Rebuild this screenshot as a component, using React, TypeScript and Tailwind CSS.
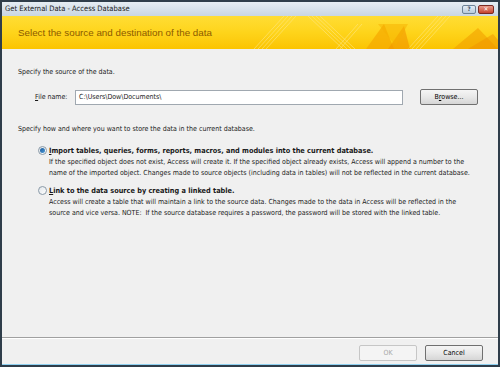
import React from "react";

const font = { fontFamily: '"DejaVu Sans Condensed", "DejaVu Sans", Tahoma, sans-serif' };

function Radio({ checked }: { checked?: boolean }) {
  return (
    <div className="w-[9px] h-[9px] rounded-full border border-[#8a9aa8] bg-gradient-to-br from-[#e0e5ea] to-[#ffffff] flex items-center justify-center shrink-0">
      {checked && <div className="w-[5px] h-[5px] rounded-full bg-gradient-to-br from-[#1a5a9a] to-[#4c9ad8]" />}
    </div>
  );
}

function Btn({ label, disabled, u }: { label: string; disabled?: boolean; u?: number }) {
  return (
    <div
      className={
        "w-[58px] h-[16px] rounded-[2px] border flex items-center justify-center text-[7px] " +
        (disabled
          ? "border-[#c6c6c6] bg-[#f4f4f4] text-[#a8a8a8]"
          : "border-[#707070] bg-gradient-to-b from-[#f5f5f5] via-[#e8e8e8] to-[#d6d6d6] text-black")
      }
    >
      {u !== undefined ? (
        <span>
          {label.slice(0, u)}
          <span className="underline">{label[u]}</span>
          {label.slice(u + 1)}
        </span>
      ) : (
        label
      )}
    </div>
  );
}

export default function App() {
  return (
    <div className="w-[500px] h-[367px] bg-[#2f3d4a] p-[2px] pb-0 flex flex-col" style={font}>
      {/* title bar */}
      <div className="h-[14px] bg-gradient-to-b from-[#e6edf3] to-[#c9d6e2] flex items-center pl-[3px] pr-[4px]">
        <span className="text-[7.5px] text-[#1a1a1a] leading-none">Get External Data - Access Database</span>
        <div className="ml-auto flex gap-[2px] items-center">
          <div className="w-[14px] h-[9px] rounded-[2px] border border-[#6d8296] bg-gradient-to-b from-[#e5eef6] to-[#b8cadb] flex items-center justify-center text-[6px] font-bold text-[#34495e] leading-none">?</div>
          <div className="w-[16px] h-[9px] rounded-[2px] border border-[#7a2a22] bg-gradient-to-b from-[#e89a8a] to-[#c4402c] flex items-center justify-center text-[6px] font-bold text-white leading-none">✕</div>
        </div>
      </div>
      {/* banner */}
      <div className="relative h-[33px] bg-gradient-to-b from-[#ffdd33] via-[#fed41a] to-[#fbc400] flex items-center pl-[16px] overflow-hidden">
        <svg className="absolute right-0 top-0" width="250" height="33" viewBox="0 0 250 33">
          <g stroke="#ffe680" strokeWidth="0.7" fill="none" opacity="0.9">
            <line x1="6" y1="33" x2="36" y2="0" />
            <line x1="10" y1="33" x2="40" y2="0" />
            <line x1="14" y1="33" x2="44" y2="0" />
            <line x1="18" y1="33" x2="48" y2="0" />
            <line x1="60" y1="0" x2="95" y2="33" />
            <line x1="64" y1="0" x2="99" y2="33" />
            <line x1="68" y1="0" x2="103" y2="33" />
            <line x1="72" y1="0" x2="107" y2="33" />
            <line x1="88" y1="33" x2="110" y2="8" />
            <line x1="92" y1="33" x2="114" y2="8" />
            <line x1="160" y1="33" x2="190" y2="0" />
            <line x1="164" y1="33" x2="194" y2="0" />
            <line x1="168" y1="33" x2="198" y2="0" />
            <line x1="172" y1="33" x2="202" y2="0" />
          </g>
          <polygon points="118,33 136,8 146,33" fill="#f5a800" opacity="0.7" />
          <polygon points="140,33 156,10 162,33" fill="#f29400" opacity="0.6" />
          <polygon points="130,8 160,8 148,30" fill="#f6b000" opacity="0.5" />
          <polygon points="205,33 230,12 250,33" fill="#f2a000" opacity="0.6" />
          <polygon points="220,33 245,18 250,24 250,33" fill="#ef9200" opacity="0.5" />
        </svg>
        <span className="relative text-[9.8px] text-[#8c5a00] leading-none" style={{ fontFamily: '"Liberation Sans", Arial, sans-serif' }}>
          Select the source and destination of the data
        </span>
      </div>
      {/* content */}
      <div className="flex-1 bg-[#f0f0f0] flex flex-col">
        <div className="flex-1 pl-[16px] pr-[10px] pt-[18px] text-[7px] text-[#1a1a1a] leading-[11px] whitespace-nowrap">
          <div>Specify the source of the data.</div>
          <div className="flex items-center mt-[11px] pl-[17px]">
            <span className="w-[40px]"><span className="underline">F</span>ile name:</span>
            <div className="w-[328px] h-[15px] border border-[#a0a8b0] bg-white flex items-center px-[3px]">C:\Users\Dow\Documents\</div>
            <div className="ml-[17px]">
              <Btn label="Browse..." u={1} />
            </div>
          </div>
          <div className="mt-[19px]">Specify how and where you want to store the data in the current database.</div>
          <div className="mt-[10px] pl-[20px] flex flex-col">
            <div className="flex items-center gap-[2px]">
              <Radio checked />
              <span className="font-bold text-[7.3px]"><span className="underline">I</span>mport tables, queries, forms, reports, macros, and modules into the current database.</span>
            </div>
            <div className="pl-[11px] leading-[11px] mt-px">
              If the specified object does not exist, Access will create it. If the specified object already exists, Access will append a number to the
              <br />
              name of the imported object. Changes made to source objects (including data in tables) will not be reflected in the current database.
            </div>
            <div className="flex items-center gap-[2px] mt-[6px]">
              <Radio />
              <span className="font-bold text-[7.3px]"><span className="underline">L</span>ink to the data source by creating a linked table.</span>
            </div>
            <div className="pl-[11px] leading-[11px] mt-px">
              Access will create a table that will maintain a link to the source data. Changes made to the data in Access will be reflected in the
              <br />
              source and vice versa. NOTE:&nbsp; If the source database requires a password, the password will be stored with the linked table.
            </div>
          </div>
        </div>
        <div className="h-px bg-[#a0a0a0] border-b border-white box-content" />
        <div className="h-[25px] flex items-start pt-[6px] justify-end gap-[8px] pr-[15px]">
          <Btn label="OK" disabled />
          <Btn label="Cancel" />
        </div>
      </div>
      <div className="h-[1px] bg-[#8fd0f0]" />
      <div className="h-[2px] bg-[#2f3d4a]" />
    </div>
  );
}
